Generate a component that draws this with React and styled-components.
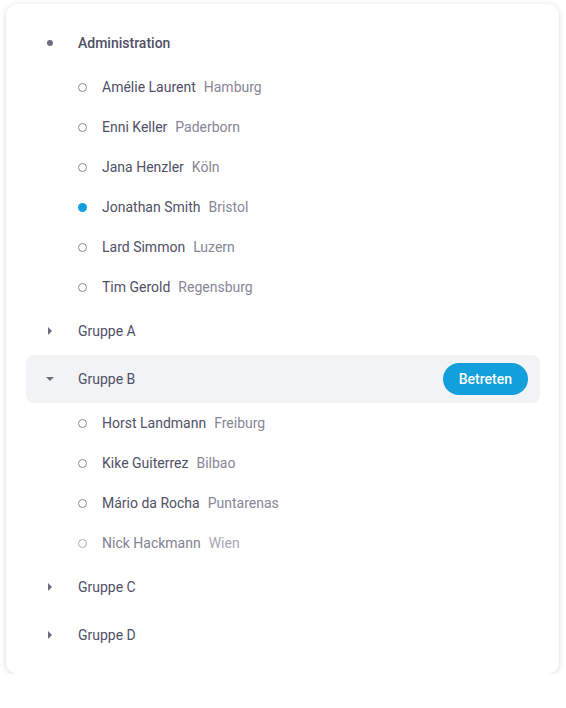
import React from "react";
import styled, { createGlobalStyle } from "styled-components";

const GlobalStyle = createGlobalStyle`
  body {
    margin: 0;
    background: #ffffff;
    font-family: Roboto, "Liberation Sans", sans-serif;
  }
`;

const Page = styled.div`
  padding: 4px 8px 0 6px;
`;

const Card = styled.div`
  width: 553px;
  box-sizing: border-box;
  background: #fff;
  border-radius: 12px;
  box-shadow: 0 1px 6px rgba(30, 30, 50, 0.16);
  padding: 15px 19px 15px 20px;
`;

const GroupRow = styled.div`
  display: flex;
  align-items: center;
  height: 48px;
  padding: 0 12px 0 0;
  border-radius: 8px;
  background: ${(p) => (p.$active ? "#f2f3f5" : "transparent")};
`;

const IconSlot = styled.div`
  width: 52px;
  display: flex;
  justify-content: center;
  padding-right: 4px;
  box-sizing: border-box;
`;

const Dot = styled.span`
  width: 6px;
  height: 6px;
  border-radius: 50%;
  background: #6e6d80;
`;

const GroupLabel = styled.span`
  flex: 1;
  font-size: 14px;
  color: #505066;
  font-weight: ${(p) => (p.$bold ? 500 : 400)};
`;

const JoinButton = styled.button`
  height: 32px;
  padding: 0 16px;
  border: none;
  border-radius: 16px;
  background: #139fdb;
  color: #fff;
  font-family: inherit;
  font-size: 14px;
  font-weight: 500;
`;

const MemberRow = styled.div`
  display: flex;
  align-items: center;
  height: 40px;
  padding-left: 52px;
  opacity: ${(p) => (p.$muted ? 0.72 : 1)};
`;

const Radio = styled.span`
  width: 9px;
  height: 9px;
  box-sizing: border-box;
  border-radius: 50%;
  margin-right: 15px;
  border: ${(p) => (p.$on ? "none" : "1px solid #8a8a98")};
  background: ${(p) => (p.$on ? "#139fdb" : "transparent")};
`;

const Name = styled.span`
  font-size: 14px;
  color: #505066;
  margin-right: 8px;
`;

const City = styled.span`
  font-size: 14px;
  color: #878698;
`;

const Caret = ({ open }) => (
  <svg width="10" height="10" viewBox="0 0 10 10">
    {open ? (
      <path d="M1 3 L9 3 L5 7 Z" fill="#6e6d80" />
    ) : (
      <path d="M3 1 L7 5 L3 9 Z" fill="#6e6d80" />
    )}
  </svg>
);

const Member = ({ name, city, on, muted }) => (
  <MemberRow $muted={muted}>
    <Radio $on={on} />
    <Name>{name}</Name>
    <City>{city}</City>
  </MemberRow>
);

const admins = [
  ["Amélie Laurent", "Hamburg"],
  ["Enni Keller", "Paderborn"],
  ["Jana Henzler", "Köln"],
  ["Jonathan Smith", "Bristol", true],
  ["Lard Simmon", "Luzern"],
  ["Tim Gerold", "Regensburg"],
];

const groupB = [
  ["Horst Landmann", "Freiburg"],
  ["Kike Guiterrez", "Bilbao"],
  ["Mário da Rocha", "Puntarenas"],
  ["Nick Hackmann", "Wien", false, true],
];

export default function App() {
  return (
    <Page>
      <GlobalStyle />
      <Card>
        <GroupRow>
          <IconSlot>
            <Dot />
          </IconSlot>
          <GroupLabel $bold>Administration</GroupLabel>
        </GroupRow>
        {admins.map(([n, c, on]) => (
          <Member key={n} name={n} city={c} on={on} />
        ))}
        <GroupRow>
          <IconSlot>
            <Caret />
          </IconSlot>
          <GroupLabel>Gruppe A</GroupLabel>
        </GroupRow>
        <GroupRow $active>
          <IconSlot>
            <Caret open />
          </IconSlot>
          <GroupLabel>Gruppe B</GroupLabel>
          <JoinButton>Betreten</JoinButton>
        </GroupRow>
        {groupB.map(([n, c, on, muted]) => (
          <Member key={n} name={n} city={c} on={on} muted={muted} />
        ))}
        <GroupRow>
          <IconSlot>
            <Caret />
          </IconSlot>
          <GroupLabel>Gruppe C</GroupLabel>
        </GroupRow>
        <GroupRow>
          <IconSlot>
            <Caret />
          </IconSlot>
          <GroupLabel>Gruppe D</GroupLabel>
        </GroupRow>
      </Card>
    </Page>
  );
}
